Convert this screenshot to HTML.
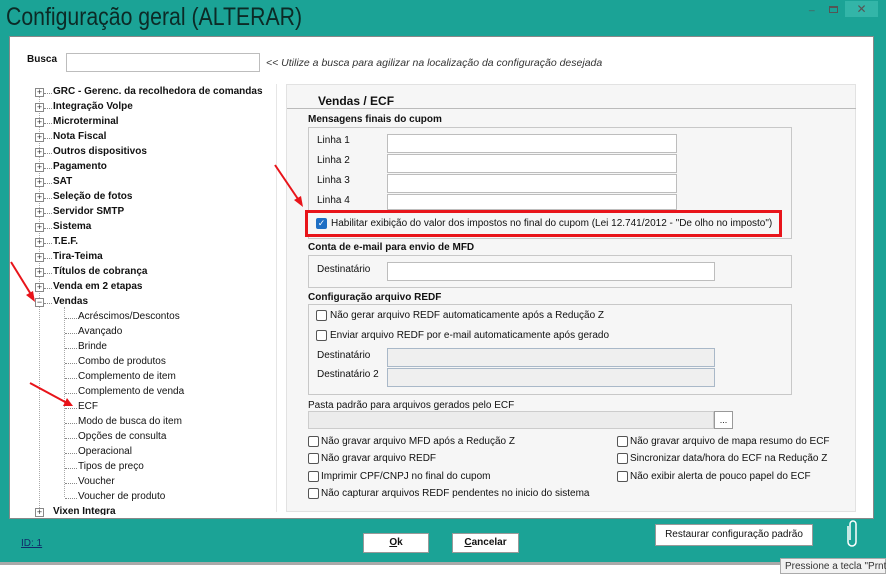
<!DOCTYPE html>
<html><head><meta charset="utf-8"><style>
*{margin:0;padding:0;box-sizing:border-box}
body{width:886px;height:574px;background:#1ba396;position:relative;overflow:hidden;font-family:"Liberation Sans",sans-serif;font-size:10px;color:#111}
.a{position:absolute}
.t{white-space:nowrap}
.inp{position:absolute;background:#fff;border:1px solid #bdbdbd;height:19px}
.dis{background:#efefef;border-color:#a9b8c8}
.grp{position:absolute;border:1px solid #c8c8c8}
.gl{position:absolute;font-weight:bold;font-size:10px;white-space:nowrap}
.cb{position:absolute;width:11px;height:11px;border:1px solid #555;border-radius:2px;background:#fff}
.tree{font-weight:bold;font-size:10px}
.pm{position:absolute;width:9px;height:9px;border:1px solid #888;background:#fff;font-size:9px;line-height:7px;text-align:center;color:#333}
.btn{position:absolute;background:#fff;border:1px solid #999;text-align:center;font-size:10px}
</style></head><body>
<div class="a t" style="left:6px;top:3px;font-size:25px;color:#0c2a26;font-family:'Liberation Sans',sans-serif;transform:scaleX(0.85);transform-origin:0 0">Configuração geral (ALTERAR)</div>
<div class="a t" style="left:809px;top:1px;color:#555;font-size:10px">_</div>
<div class="a" style="left:829px;top:6px;width:9px;height:7px;border:1px solid #555;border-top-width:2px"></div>
<div class="a" style="left:845px;top:1px;width:33px;height:16px;background:#33b5a8;color:#555;text-align:center;font-size:12px;line-height:16px">✕</div>
<div class="a" style="left:9px;top:36px;width:865px;height:483px;background:#fff;border:1px solid #888"></div>
<div class="a t" style="left:27px;top:54px;font-weight:bold">Busca</div>
<div class="inp" style="left:66px;top:53px;width:194px;height:19px"></div>
<div class="a t" style="left:266px;top:57px;font-style:italic;color:#333;font-size:10.5px">&lt;&lt; Utilize a busca para agilizar na localização da configuração desejada</div>
<div class="a" style="left:39px;top:90px;height:420px;border-left:1px dotted #aaa"></div>
<div class="a" style="left:64px;top:307px;height:190px;border-left:1px dotted #aaa"></div>
<div id="tree"></div>
<script>
var top1=["GRC - Gerenc. da recolhedora de comandas","Integração Volpe","Microterminal","Nota Fiscal","Outros dispositivos","Pagamento","SAT","Seleção de fotos","Servidor SMTP","Sistema","T.E.F.","Tira-Teima","Títulos de cobrança","Venda em 2 etapas"];
var h="";var y=86;
top1.forEach(function(s){h+='<div class="pm" style="left:35px;top:'+(y+2)+'px">+</div><div class="a" style="left:44px;top:'+(y+7)+'px;width:8px;border-top:1px dotted #888"></div><div class="a t tree" style="left:53px;top:'+y+'px">'+s+'</div>';y+=15;});
h+='<div class="pm" style="left:35px;top:'+(y+2)+'px">−</div><div class="a" style="left:44px;top:'+(y+7)+'px;width:8px;border-top:1px dotted #888"></div><div class="a t tree" style="left:53px;top:'+y+'px">Vendas</div>';y+=15;
["Acréscimos/Descontos","Avançado","Brinde","Combo de produtos","Complemento de item","Complemento de venda","ECF","Modo de busca do item","Opções de consulta","Operacional","Tipos de preço","Voucher","Voucher de produto"].forEach(function(s){h+='<div class="a" style="left:65px;top:'+(y+7)+'px;width:12px;border-top:1px dotted #888"></div><div class="a t" style="left:78px;top:'+y+'px">'+s+'</div>';y+=15;});
h+='<div class="pm" style="left:35px;top:'+(y+2)+'px">+</div><div class="a t tree" style="left:53px;top:'+y+'px;height:9px;overflow:hidden">Vixen Integra</div>';
document.getElementById("tree").innerHTML=h;
</script>
<div class="a" style="left:276px;top:84px;height:428px;border-left:1px solid #e6e6e6"></div>
<div class="a" style="left:286px;top:84px;width:570px;height:428px;background:#f6f6f6;border:1px solid #e2e2e2"></div>
<div class="a t" style="left:318px;top:94px;font-weight:bold;font-size:12px">Vendas / ECF</div>
<div class="a" style="left:287px;top:108px;width:569px;border-top:1px solid #bbb"></div>
<div class="gl" style="left:308px;top:114px">Mensagens finais do cupom</div>
<div class="grp" style="left:308px;top:127px;width:484px;height:112px"></div>
<div class="a t" style="left:317px;top:135px">Linha 1</div><div class="inp" style="left:387px;top:134px;width:290px"></div>
<div class="a t" style="left:317px;top:155px">Linha 2</div><div class="inp" style="left:387px;top:154px;width:290px"></div>
<div class="a t" style="left:317px;top:175px">Linha 3</div><div class="inp" style="left:387px;top:174px;width:290px"></div>
<div class="a t" style="left:317px;top:195px">Linha 4</div><div class="inp" style="left:387px;top:194px;width:290px;height:16px"></div>
<div class="a" style="left:305px;top:210px;width:477px;height:27px;border:3px solid #e8141a;background:#f6f6f6"></div>
<div class="a" style="left:316px;top:218px;width:11px;height:11px;background:#1f6fc4;border-radius:2px;color:#fff;font-size:9px;line-height:11px;text-align:center">✓</div>
<div class="a t" style="left:331px;top:218px">Habilitar exibição do valor dos impostos no final do cupom (Lei 12.741/2012 - "De olho no imposto")</div>
<div class="gl" style="left:308px;top:242px">Conta de e-mail para envio de MFD</div>
<div class="grp" style="left:308px;top:255px;width:484px;height:33px"></div>
<div class="a t" style="left:317px;top:264px">Destinatário</div><div class="inp" style="left:387px;top:262px;width:328px"></div>
<div class="gl" style="left:308px;top:292px">Configuração arquivo REDF</div>
<div class="grp" style="left:308px;top:304px;width:484px;height:91px"></div>
<div class="cb" style="left:316px;top:310px"></div><div class="a t" style="left:330px;top:310px">Não gerar arquivo REDF automaticamente após a Redução Z</div>
<div class="cb" style="left:316px;top:330px"></div><div class="a t" style="left:330px;top:330px">Enviar arquivo REDF por e-mail automaticamente após gerado</div>
<div class="a t" style="left:317px;top:350px">Destinatário</div><div class="inp dis" style="left:387px;top:348px;width:328px"></div>
<div class="a t" style="left:317px;top:369px">Destinatário 2</div><div class="inp dis" style="left:387px;top:368px;width:328px"></div>
<div class="a t" style="left:308px;top:400px">Pasta padrão para arquivos gerados pelo ECF</div>
<div class="inp" style="left:308px;top:411px;width:406px;height:18px;background:#ececec;border-color:#ccc"></div>
<div class="btn" style="left:714px;top:411px;width:19px;height:18px;line-height:16px;font-size:9px">...</div>
<div class="cb" style="left:308px;top:436px"></div><div class="a t" style="left:321px;top:436px">Não gravar arquivo MFD após a Redução Z</div>
<div class="cb" style="left:308px;top:453px"></div><div class="a t" style="left:321px;top:453px">Não gravar arquivo REDF</div>
<div class="cb" style="left:308px;top:471px"></div><div class="a t" style="left:321px;top:471px">Imprimir CPF/CNPJ no final do cupom</div>
<div class="cb" style="left:308px;top:488px"></div><div class="a t" style="left:321px;top:488px">Não capturar arquivos REDF pendentes no inicio do sistema</div>
<div class="cb" style="left:617px;top:436px"></div><div class="a t" style="left:630px;top:436px">Não gravar arquivo de mapa resumo do ECF</div>
<div class="cb" style="left:617px;top:453px"></div><div class="a t" style="left:630px;top:453px">Sincronizar data/hora do ECF na Redução Z</div>
<div class="cb" style="left:617px;top:471px"></div><div class="a t" style="left:630px;top:471px">Não exibir alerta de pouco papel do ECF</div>
<svg class="a" style="left:0;top:0" width="886" height="574">
<g stroke="#e8141a" stroke-width="2" fill="#e8141a">
<line x1="275" y1="165" x2="300" y2="202"/><polygon points="303,207 294,200 301,196" stroke="none"/>
<line x1="11" y1="262" x2="32" y2="296"/><polygon points="35,302 26,295 33,291" stroke="none"/>
<line x1="30" y1="383" x2="67" y2="403"/><polygon points="73,406 63,406 67,398" stroke="none"/>
</g>
<path d="M848 526 v16 a4 4 0 0 0 8 0 v-18 a3 3 0 0 0 -6 0 v16" stroke="#fff" stroke-width="1.5" fill="none"/>
</svg>
<div class="a t" style="left:21px;top:538px;text-decoration:underline;color:#102a6a;font-size:10px">ID: 1</div>
<div class="btn" style="left:363px;top:533px;width:66px;height:20px;line-height:18px;font-weight:bold"><u>O</u>k</div>
<div class="btn" style="left:452px;top:533px;width:67px;height:20px;line-height:18px;font-weight:bold"><u>C</u>ancelar</div>
<div class="btn" style="left:655px;top:524px;width:158px;height:22px;line-height:20px">Restaurar configuração padrão</div>
<div class="a" style="left:0;top:562px;width:886px;height:3px;background:#a9a9a9"></div>
<div class="a" style="left:0;top:565px;width:886px;height:9px;background:#fff"></div>
<div class="a t" style="left:780px;top:558px;width:106px;height:16px;background:#f2f2f2;border:1px solid #aaa;font-size:10px;padding:2px 0 0 4px;color:#333">Pressione a tecla "Prnt</div>
</body></html>
